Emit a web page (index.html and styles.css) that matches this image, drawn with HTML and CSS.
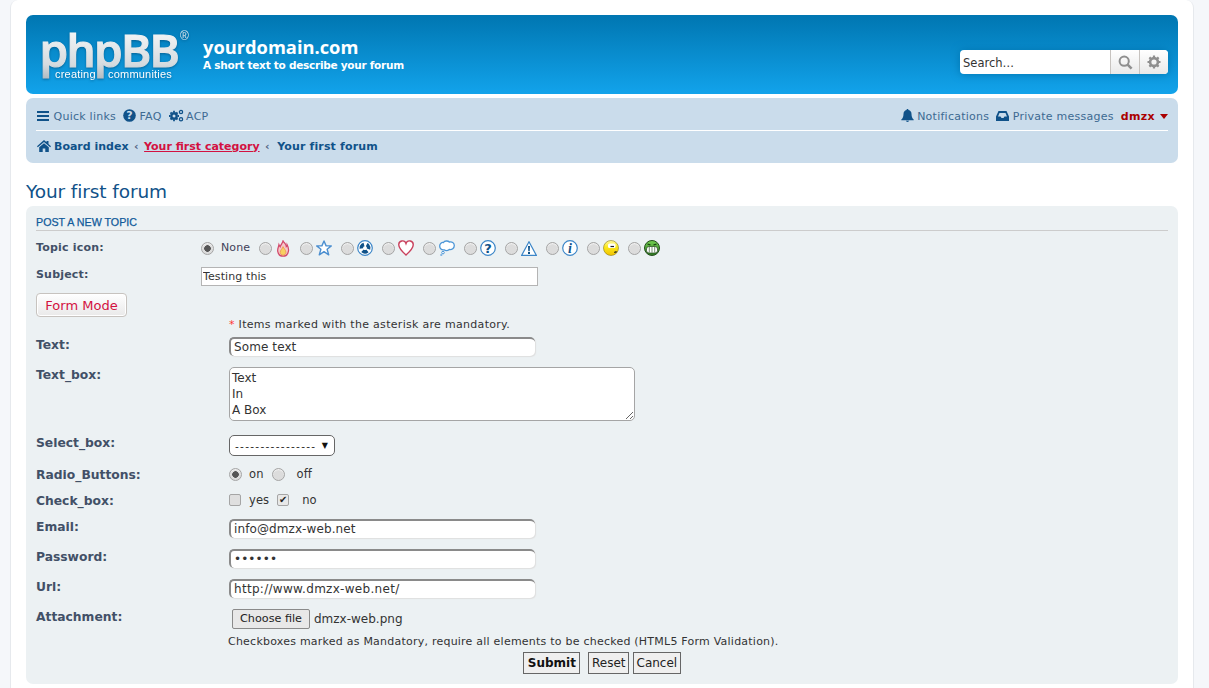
FILE: index.html
```html
<!DOCTYPE html>
<html lang="en">
<head>
<meta charset="utf-8">
<title>Your first forum</title>
<link rel="stylesheet" href="styles.css">
</head>
<body>
<div class="wrap">
  <header class="headerbar">
    <svg class="logo" width="150" height="60" viewBox="0 0 150 60">
      <defs><linearGradient id="lg" x1="0" y1="0" x2="0" y2="1"><stop offset="0" stop-color="#ffffff"/><stop offset=".75" stop-color="#d5dbdf"/><stop offset="1" stop-color="#aeb8be"/></linearGradient></defs>
      <text x="-1.500" y="37" class="logo-main" fill="url(#lg)" stroke="url(#lg)">phpBB</text>
      <text x="14" y="48" class="logo-sub" fill="#fff">creating</text>
      <text x="67" y="48" class="logo-sub" fill="#fff">communities</text>
      <text x="139" y="10" class="logo-r" fill="#dfe8ee">®</text>
    </svg>
    <div class="site">
      <div class="site-name">yourdomain.com</div>
      <div class="site-desc">A short text to describe your forum</div>
    </div>
    <div class="search">
      <span class="search-input">Search…</span>
      <span class="search-btn"><svg width="15" height="15" viewBox="0 0 15 15"><circle cx="6.2" cy="6.2" r="4.6" fill="none" stroke="#8f8f8f" stroke-width="2"/><path d="M9.6 9.6 13.6 13.6" stroke="#8f8f8f" stroke-width="2.6"/></svg></span>
      <span class="search-btn last"><svg width="14" height="14" viewBox="0 0 14 14"><circle cx="7" cy="7" r="3.9" fill="none" stroke="#8f8f8f" stroke-width="2.6"/><path d="M7 .5V3M7 11v2.500M.5 7H3M11 7h2.500M2.400 2.400 4 4M10 10l1.600 1.600M2.400 11.600 4 10M10 4l1.600-1.600" stroke="#8f8f8f" stroke-width="2.200"/></svg></span>
    </div>
  </header>

  <nav class="navbar">
    <div class="nav-row">
      <a class="nav-link"><svg class="ico" width="13" height="12" viewBox="0 0 13 12"><path d="M0 1h12v2H0zM0 5h12v2H0zM0 9h12v2H0z" fill="#105289"/></svg>Quick links</a>
      <a class="nav-link"><svg class="ico" width="13" height="13" viewBox="0 0 13 13"><circle cx="6.500" cy="6.500" r="6.300" fill="#105289"/><text x="6.500" y="10.200" class="q" fill="#cadceb">?</text></svg>FAQ</a>
      <a class="nav-link"><svg class="ico tight" width="15" height="13" viewBox="0 0 15 13"><circle cx="5" cy="7" r="2.700" fill="none" stroke="#105289" stroke-width="2.400"/><path d="M5 1.800V3M5 11v1.200M0 7h1.200M8.800 7H10M1.500 3.500l1 1M7.500 9.500l1 1M1.500 10.500l1-1M7.500 4.500l1-1" stroke="#105289" stroke-width="1.800"/><circle cx="12" cy="3" r="1.600" fill="none" stroke="#105289" stroke-width="1.300"/><circle cx="12" cy="10.300" r="1.600" fill="none" stroke="#105289" stroke-width="1.300"/></svg>ACP</a>
      <span class="spacer"></span>
      <a class="nav-link"><svg class="ico" width="13" height="13" viewBox="0 0 13 13"><path d="M6.500 0c.7 0 1 .5 1 1 2 .4 3 2 3 4 0 3 1 4.500 2.200 5.500v.7H.3v-.7C1.500 9.500 2.500 8 2.500 5c0-2 1-3.600 3-4 0-.5.3-1 1-1zM5 11.800h3c0 .7-.7 1.200-1.500 1.200S5 12.500 5 11.800z" fill="#105289"/></svg>Notifications</a>
      <a class="nav-link"><svg class="ico" width="13" height="12" viewBox="0 0 13 12"><path d="M2.500 1h8L13 6.500V11H0V6.500zM2 6.500h2.500L5.500 8h2l1-1.500H11L9.500 3h-6z" fill="#105289" fill-rule="evenodd"/></svg>Private messages</a>
      <a class="nav-user">dmzx<span class="caret"></span></a>
    </div>
    <div class="crumbs">
      <svg class="ico" width="14" height="12" viewBox="0 0 14 12"><path d="M7 0l2.500 2.200V1h2v3l2.500 2.300-.8.9L7 2 .8 7.200 0 6.300zM2.200 7.300 7 3.300l4.800 4V12H8.300V8.500H5.700V12H2.200z" fill="#105289"/></svg>
      <a class="crumb">Board index</a><span class="sep">‹</span>
      <a class="crumb hot">Your first category</a><span class="sep">‹</span>
      <a class="crumb last">Your first forum</a>
    </div>
  </nav>

  <h2 class="forum-title">Your first forum</h2>

  <form class="panel">
    <h3 class="panel-title">POST A NEW TOPIC</h3>

    <div class="row row-icon">
      <label class="lab">Topic icon:</label>
      <div class="icons">
        <span class="radio on"></span><span class="none">None</span>
        <span class="radio"></span>
        <svg class="ti" width="16" height="17" viewBox="0 0 16 17"><g transform="translate(1.500 0) scale(.82 .95)"><path d="M8 1c1 2 4 3 4 6 1-.5 1-1.500 1-2 1.500 2.500 2 5 1.500 7-.5 3-3 5-6.500 5s-6-2-6.500-5C1 9 2.500 7.500 3 5c.5 1 1 1.500 1.500 2C5 5 7.500 3.500 8 1z" fill="#f6c7c9" stroke="#d2486a" stroke-width="1.500"/><path d="M8 7c.5 2 3.500 3 3.500 6 0 1.500-1.500 3-3.500 3s-3.500-1.500-3.500-3C4.500 10.500 7.500 9 8 7z" fill="#f8d060" stroke="#eb9a50"/></g></svg>
        <span class="radio"></span>
        <svg class="ti" width="16" height="16" viewBox="0 0 16 16"><path d="M8 1l2.100 4.900h5.200l-4.200 3.300 1.600 5.600L8 11.700l-4.700 3.100 1.600-5.600L.7 5.900h5.200z" fill="#fff" stroke="#4c8fd0" stroke-width="1.400" stroke-linejoin="round"/></svg>
        <span class="radio"></span>
        <svg class="ti" width="16" height="16" viewBox="0 0 16 16"><circle cx="8" cy="8" r="7.300" fill="#fff" stroke="#3c86c8" stroke-width="1.200"/><circle cx="8" cy="8" r="3.700" fill="none" stroke="#105289" stroke-width="3.600" stroke-dasharray="5.200 2.530" transform="rotate(50 8 8)"/></svg>
        <span class="radio"></span>
        <svg class="ti" width="16" height="16" viewBox="0 0 16 16"><path d="M8 15C3 10.500.8 8 .8 5A3.700 3.700 0 0 1 8 3.500 3.700 3.700 0 0 1 15.200 5C15.200 8 13 10.500 8 15z" fill="#fff" stroke="#c9405c" stroke-width="1.400"/></svg>
        <span class="radio"></span>
        <svg class="ti" width="16" height="16" viewBox="0 0 16 16"><path d="M4.500 2.500C5.500.7 9 .5 10.300 2c2.500-.7 5 .8 5 3.500 0 2.800-2.500 4.500-5 4-1.500 1.200-4 1.200-5.300.3C2.500 10.200.7 8.500.7 6c0-2.300 2-4 3.800-3.500z" fill="#fff" stroke="#4c96d7" stroke-width="1.300"/><circle cx="4" cy="12.600" r="1.300" fill="#fff" stroke="#4c96d7"/><circle cx="2.300" cy="15" r=".7" fill="#fff" stroke="#4c96d7" stroke-width=".8"/></svg>
        <span class="radio"></span>
        <svg class="ti" width="16" height="16" viewBox="0 0 16 16"><circle cx="8" cy="8" r="7.300" fill="#fff" stroke="#3c86c8" stroke-width="1.200"/><text x="8" y="12.500" class="ti-q" fill="#105289">?</text></svg>
        <span class="radio"></span>
        <svg class="ti" width="16" height="15" viewBox="0 0 16 15"><path d="M8 .8 15.400 14.400H.6z" fill="#fff" stroke="#3c86c8" stroke-width="1.200"/><path d="M7 5h2l-.3 5.200H7.300zM7 11h2v2H7z" fill="#105289"/></svg>
        <span class="radio"></span>
        <svg class="ti" width="16" height="16" viewBox="0 0 16 16"><circle cx="8" cy="8" r="7.300" fill="#fff" stroke="#3c86c8" stroke-width="1.200"/><text x="8" y="12.800" class="ti-i" fill="#105289">i</text></svg>
        <span class="radio"></span>
        <svg class="ti" width="16" height="16" viewBox="0 0 16 16"><defs><linearGradient id="ys" x1="0" y1="0" x2="0" y2="1"><stop offset="0" stop-color="#fff9a0"/><stop offset=".45" stop-color="#fbe81a"/><stop offset="1" stop-color="#f2c200"/></linearGradient></defs><circle cx="8" cy="8" r="7.500" fill="url(#ys)" stroke="#8a7a10" stroke-width=".6"/><rect x="5" y="3.500" width="7.500" height="4.500" rx="1.500" fill="#fff"/><path d="M7.500 6.500h3.500" stroke="#222" stroke-width="1.200"/><path d="M11 12.300h2V11" fill="none" stroke="#222" stroke-width="1.100"/></svg>
        <span class="radio"></span>
        <svg class="ti" width="16" height="16" viewBox="0 0 16 16"><defs><linearGradient id="gs" x1="0" y1="0" x2="0" y2="1"><stop offset="0" stop-color="#74d050"/><stop offset="1" stop-color="#2f7a22"/></linearGradient></defs><circle cx="8" cy="8" r="7.500" fill="url(#gs)" stroke="#234f1c"/><path d="M3.500 4 6.500 5M12.500 4 9.500 5" stroke="#143a10" stroke-width="1.300"/><rect x="2.500" y="6.500" width="11" height="6.500" rx="2.500" fill="#fff" stroke="#1c4516" stroke-width=".7"/><path d="M5.300 7v5.500M8 7v5.500M10.700 7v5.500" stroke="#1c4516" stroke-width=".6"/></svg>
      </div>
    </div>

    <div class="row row-subject">
      <label class="lab">Subject:</label>
      <input class="subject" type="text" value="Testing this">
    </div>

    <div class="form-mode"><button type="button" class="mode-btn">Form Mode</button></div>

    <div class="form-fields">
      <p class="note"><span class="star">*</span> Items marked with the asterisk are mandatory.</p>

      <div class="row f f-text"><label class="lab big">Text:</label><input class="tinput" type="text" value="Some text"></div>
      <div class="row f f-area"><label class="lab big">Text_box:</label><textarea class="area" rows="3">Text
In
A Box</textarea></div>
      <div class="row f f-select"><label class="lab big">Select_box:</label><span class="select"><span class="dashes">----------------</span><i class="arrow">▼</i></span></div>
      <div class="row f f-radio"><label class="lab big">Radio_Buttons:</label><div class="opts"><span class="radio on"></span><span class="opt">on</span><span class="radio"></span><span class="opt gap">off</span></div></div>
      <div class="row f f-check"><label class="lab big">Check_box:</label><div class="opts"><span class="check"></span><span class="opt">yes</span><span class="check on">✔</span><span class="opt gap">no</span></div></div>
      <div class="row f f-input"><label class="lab big">Email:</label><input class="tinput" type="text" value="info@dmzx-web.net"></div>
      <div class="row f f-input"><label class="lab big">Password:</label><input class="tinput" type="password" value="123456"></div>
      <div class="row f f-input"><label class="lab big">Url:</label><input class="tinput url" type="text" value="http://www.dmzx-web.net/"></div>
      <div class="row f f-file"><label class="lab big">Attachment:</label><div class="file"><span class="file-btn">Choose file</span><span class="file-name">dmzx-web.png</span></div></div>
      <p class="hint">Checkboxes marked as Mandatory, require all elements to be checked (HTML5 Form Validation).</p>
    </div>

    <div class="actions">
      <button type="button" class="act primary">Submit</button>
      <button type="button" class="act">Reset</button>
      <button type="button" class="act">Cancel</button>
    </div>
  </form>
</div>
</body>
</html>
```

FILE: styles.css
```css
* { box-sizing: border-box; }
html, body { height: 100%; }
body {
  margin: 0;
  background: #f5f7fa;
  font-family: "DejaVu Sans", Verdana, sans-serif;
  font-size: 11px;
  color: #536482;
  overflow: hidden;
}
.wrap {
  width: 1184px;
  height: 688px;
  margin: 0 0 0 10px;
  padding: 15px 15px 0;
  background: #fff;
  border: 1px solid #e6e9ed;
  border-top: 0;
  border-bottom: 0;
  border-radius: 8px 8px 0 0;
}

.headerbar {
  display: flex;
  align-items: flex-start;
  height: 79px;
  background: linear-gradient(#0076b1 0%, #12a3eb 100%);
  border-radius: 7px;
  color: #fff;
  padding: 0 10px 0 15px;
}
.logo { flex: none; margin-top: 15px; display: block; overflow: visible; filter: drop-shadow(0 1px 1px rgba(0, 60, 100, .5)); }
.logo-main { font: 600 46px/1 "Open Sans", sans-serif; letter-spacing: -1.700px; stroke-width: 1.200px; }
.logo-sub { font: 400 11px "Liberation Sans", sans-serif; letter-spacing: .2px; }
.logo-r { font: 400 12px "Liberation Sans", sans-serif; }
.site { margin: 22px 0 0 12px; }
.site-name { font: 700 18.300px/20px "Open Sans", "DejaVu Sans", sans-serif; }
.site-desc { font: 700 10.500px/16px "DejaVu Sans", sans-serif; letter-spacing: -.26px; }
.search {
  margin: 35px 0 0 auto;
  width: 208px;
  height: 24px;
  display: flex;
  background: #fff;
  border-radius: 4px;
  box-shadow: 0 0 8px #0075b0;
  overflow: hidden;
}
.search-input { flex: 1; font-size: 11.500px; line-height: 26px; padding-left: 3px; color: #333; }
.search-btn {
  width: 29px;
  display: flex;
  align-items: center;
  justify-content: center;
  background: linear-gradient(#fff, #e9e9e9);
  border-left: 1px solid #c7c3bf;
}

.navbar {
  margin-top: 4px;
  height: 65px;
  background: #cadceb;
  border-radius: 7px;
  padding: 0 10px;
}
.nav-row {
  display: flex;
  align-items: center;
  height: 33px;
  border-bottom: 1px solid #fff;
  padding: 5px 0 0 1px;
}
.nav-link { display: flex; align-items: center; margin-right: 7px; font-size: 11px; letter-spacing: .25px; color: #3d6a92; white-space: nowrap; }
.ico { flex: none; margin-right: 4px; }
.nav-link .ico { margin-top: -2px; margin-right: 3.500px; }
.nav-link .ico.tight { margin-right: 2.500px; }
.q { font: 700 11px "DejaVu Sans", sans-serif; text-anchor: middle; }
.spacer { flex: 1; }
.nav-user { display: flex; align-items: center; font-weight: 700; font-size: 11px; letter-spacing: .35px; color: #aa0000; }
.caret { margin-left: 5px; border: 4.500px solid transparent; border-top: 5px solid #aa0000; border-bottom: 0; }
.crumbs { display: flex; align-items: center; height: 30px; padding-left: 1px; font-weight: 700; }
.crumbs .ico { margin-right: 3px; }
.crumb { font-size: 11px; color: #105289; white-space: nowrap; }
.crumb.hot { color: #d31141; text-decoration: underline; }
.crumb.last { margin-left: 2px; letter-spacing: .15px; }
.sep { margin: 0 5.500px; font-weight: 700; color: #536482; }

.forum-title { margin: 18px 0 0; font: 400 18.500px/22px "DejaVu Sans", sans-serif; letter-spacing: -.1px; color: #105289; }
.panel {
  margin-top: 3px;
  height: 478px;
  background: #ecf1f3;
  border-radius: 7px;
  padding: 10px;
}
.panel-title {
  margin: 0;
  height: 15px;
  font: 400 10.700px/12px "Liberation Sans", sans-serif;
  -webkit-text-stroke: .25px #115a9a;
  color: #115a9a;
  border-bottom: 1px solid #cccccc;
}

.row { display: flex; align-items: flex-start; }
.lab { flex: none; width: 165px; font-weight: 700; font-size: 11px; letter-spacing: .2px; color: #425067; }
.row-icon { height: 30px; padding-top: 10px; }
.icons { display: flex; align-items: center; height: 16px; margin-top: -1px; color: #333; }
.radio {
  flex: none;
  display: block;
  width: 13px;
  height: 13px;
  margin-right: 5px;
  border: 1px solid #a5a5a5;
  border-radius: 50%;
  background: #dcdcdc;
  box-shadow: inset 0 1px 1px #f4f4f4;
}
.icons .radio { margin-right: 3px; }
.radio.on { background: radial-gradient(circle, #555 0 3px, #dcdcdc 3.600px); }
.none { font-size: 11px; margin: -2px 9px 0 4px; letter-spacing: .1px; color: #3f3f58; }
.ti { flex: none; margin-right: 9px; }
.ti-q { font: 700 13px "DejaVu Sans", sans-serif; text-anchor: middle; }
.ti-i { font: italic 700 14px "Liberation Serif", serif; text-anchor: middle; }
.row-subject { height: 30px; }
.row-subject .lab { padding-top: 7px; }
.subject {
  width: 337px;
  height: 19px;
  margin: 6px 0 0;
  padding: 0 1px 0;
  border: 1px solid #b4b4b4;
  background: #fff;
  font: 11px "DejaVu Sans", sans-serif;
  letter-spacing: .1px;
  color: #333;
  outline: none;
}
.form-mode { height: 24px; margin-top: 2px; }
.mode-btn {
  display: block;
  width: 91px;
  height: 24px;
  padding: 0;
  border: 1px solid #c7c3bf;
  border-radius: 4px;
  background: linear-gradient(#fff, #e9e9e9);
  font: 13px "DejaVu Sans", sans-serif;
  color: #d31141;
  box-shadow: 0 0 0 1px #fff inset;
}
.note { margin: 1px 0 0 193px; height: 14px; line-height: 14px; font-size: 11px; letter-spacing: .3px; color: #333; }
.star { color: #ff3333; }
.f .lab { width: 193px; padding-top: 1px; font-size: 12.300px; letter-spacing: 0; }
.f-text { height: 30px; margin-top: 5px; }
.tinput {
  width: 306px;
  height: 19px;
  margin: 0;
  padding: 0 3px 1px;
  border: 0;
  border-top: 2px solid #8a8a8a;
  border-left: 2px solid #8a8a8a;
  border-radius: 5px;
  background: #fff;
  font: 12px "DejaVu Sans", sans-serif;
  letter-spacing: .1px;
  color: #333;
  box-shadow: 1px 1px 1px #dfdfdf;
  outline: none;
}
.tinput.url { letter-spacing: .3px; }
.f-area { height: 68px; }
.area {
  display: block;
  width: 406px;
  height: 54px;
  margin: 0;
  padding: 2px 2px;
  border: 1px solid #a5a5a5;
  border-radius: 5px;
  background: #fff;
  font: 12px/16px "DejaVu Sans", sans-serif;
  color: #333;
  outline: none;
  overflow: hidden;
}
.f-select { height: 26px; }
.select {
  display: flex;
  align-items: center;
  width: 106px;
  height: 21px;
  padding: 0 6px 0 5px;
  border: 1px solid #666;
  border-radius: 5px;
  background: #fff;
  color: #222;
  white-space: nowrap;
  overflow: hidden;
}
.dashes { font-size: 10.500px; letter-spacing: 1.300px; }
.arrow { margin-left: auto; font-style: normal; font-size: 8px; color: #111; }
.f-radio { height: 26px; align-items: center; }
.f-check { height: 32px; padding-bottom: 6px; align-items: center; }
.opts { display: flex; align-items: center; }
.opt { font-size: 11.500px; color: #333; margin: 0 8px 0 2px; letter-spacing: .1px; }
.opt.gap { margin-left: 7px; }
.check {
  flex: none;
  display: flex;
  align-items: center;
  justify-content: center;
  width: 12px;
  height: 12px;
  margin-right: 6px;
  border: 1px solid #a5a5a5;
  border-radius: 2px;
  background: #dfdfdf;
  font-size: 10px;
  line-height: 1;
  color: #222;
}
.check.on { background: #e8e8e8; }
.f-input { height: 30px; }
.f-file { height: 26px; }
.file { display: flex; align-items: center; margin-left: 3px; }
.file-btn {
  display: block;
  width: 78px;
  height: 20px;
  border: 1px solid #8a8a8a;
  border-radius: 2px;
  background: #e8e8e8;
  font-size: 11.200px;
  line-height: 18px;
  text-align: center;
  color: #222;
}
.file-name { margin-left: 4px; font-size: 12px; color: #333; }
.hint { margin: 0 0 0 192px; height: 14px; line-height: 14px; font-size: 11px; letter-spacing: .23px; color: #333; }
.actions { display: flex; justify-content: center; margin-top: 3px; padding-right: 4px; }
.act {
  height: 22px;
  margin: 0 0 0 4px;
  padding: 0 2.500px;
  border: 1px solid #666;
  border-radius: 0;
  background: #efefef;
  font: 12px "DejaVu Sans", sans-serif;
  color: #222;
}
.act.primary { font-weight: 700; margin-right: 4px; padding: 0 3.500px; color: #111; }
```
